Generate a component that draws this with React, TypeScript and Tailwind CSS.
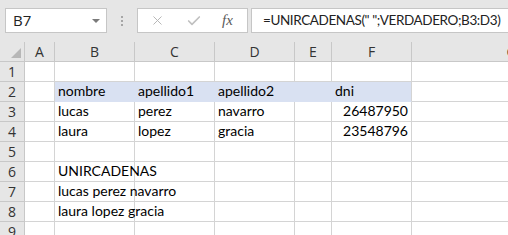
import { X, Check } from 'lucide-react';

const cols = ['A', 'B', 'C', 'D', 'E', 'F', 'G'];
const widths = ['w-[30px]', 'w-[80px]', 'w-[80px]', 'w-[80px]', 'w-[37px]', 'w-[80px]', 'w-[200px]'];

type Cell = { text?: string; right?: boolean };

const rows: Record<number, Record<number, Cell>> = {
  2: { 1: { text: 'nombre' }, 2: { text: 'apellido1' }, 3: { text: 'apellido2' }, 5: { text: 'dni' } },
  3: { 1: { text: 'lucas' }, 2: { text: 'perez' }, 3: { text: 'navarro' }, 5: { text: '26487950', right: true } },
  4: { 1: { text: 'laura' }, 2: { text: 'lopez' }, 3: { text: 'gracia' }, 5: { text: '23548796', right: true } },
  6: { 1: { text: 'UNIRCADENAS' } },
  7: { 1: { text: 'lucas perez navarro' } },
  8: { 1: { text: 'laura lopez gracia' } },
};

const App = () => {
  return (
    <div className="w-[508px] h-[235px] overflow-hidden bg-white" style={{ fontFamily: 'Lato, "Open Sans", sans-serif' }}>
      {/* formula bar */}
      <div className="h-[42px] bg-[#e6e6e6] flex items-start pt-[8px] pl-[5px] overflow-hidden">
        <div className="shrink-0 w-[102px] h-[25px] bg-white border border-[#c6c6c6] flex items-center justify-between pl-[7px] pr-[6px]">
          <span className="text-[15px] text-[#222]" style={{ fontFamily: '"Open Sans", sans-serif' }}>B7</span>
          <span className="w-0 h-0 border-l-[4px] border-r-[4px] border-t-[4px] border-l-transparent border-r-transparent border-t-[#7a7a7a]" />
        </div>
        <div className="shrink-0 w-[30px] h-[25px] flex flex-col items-center justify-center gap-[2px]">
          <span className="w-[2px] h-[2px] bg-[#a6a6a6]" />
          <span className="w-[2px] h-[2px] bg-[#a6a6a6]" />
          <span className="w-[2px] h-[2px] bg-[#a6a6a6]" />
        </div>
        <div className="shrink-0 w-[111px] h-[25px] bg-white border border-[#c6c6c6] flex items-center text-[#b3b3b3]">
          <X size={15} strokeWidth={1.5} className="ml-[12px]" />
          <Check size={16} strokeWidth={2.5} className="ml-[21px] text-[#c0c0c0]" />
          <span className="ml-[20px] text-[15px] italic text-[#5a5a5a]" style={{ fontFamily: '"Liberation Serif", serif' }}>fx</span>
        </div>
        <div className="ml-[3px] flex-1 min-w-0 h-[25px] bg-white border border-[#c6c6c6] border-r-0 flex items-center pl-[11px] overflow-hidden">
          <span className="text-[13.5px] tracking-[-0.4px] text-[#222] whitespace-nowrap">=UNIRCADENAS(" ";VERDADERO;B3:D3)</span>
        </div>
      </div>

      {/* column headers */}
      <div className="flex h-[20px] bg-[#e6e6e6] border-b border-[#c8c8c8] text-[14px] text-[#333]" style={{ fontFamily: '"Open Sans", sans-serif' }}>
        <div className="shrink-0 w-[25px] border-r border-[#c8c8c8] flex items-end justify-end pr-[3px] pb-[3px]">
          <svg width="10" height="10" viewBox="0 0 10 10">
            <polygon points="10,0 10,10 0,10" fill="#b7b7b7" />
          </svg>
        </div>
        {cols.map((c, i) => (
          <div key={c} className={`${widths[i]} shrink-0 border-r border-[#c8c8c8] flex items-center justify-center leading-none`}>
            {c}
          </div>
        ))}
      </div>

      {/* rows */}
      {[1, 2, 3, 4, 5, 6, 7, 8, 9].map(r => (
        <div key={r} className="flex h-[20px]">
          <div className="shrink-0 w-[25px] bg-[#e6e6e6] border-r border-b border-[#c8c8c8] flex items-center justify-center text-[14px] text-[#333] leading-none" style={{ fontFamily: '"Open Sans", sans-serif' }}>
            {r}
          </div>
          {cols.map((c, i) => {
            const cell = rows[r]?.[i];
            const hl = r === 2 && i >= 1 && i <= 5;
            return (
              <div
                key={c}
                className={`${widths[i]} shrink-0 border-b ${hl ? 'bg-[#d9e1f2] border-[#d9e1f2]' : 'border-[#d4d4d4]'} ${hl && i < 5 ? '' : 'border-r'} ${hl && i === 5 ? 'border-r-[#d4d4d4]' : ''} flex items-end pb-[1px] text-[14px] text-black leading-none whitespace-nowrap ${cell?.right ? 'justify-end pr-[3px]' : 'pl-[3px]'}`}
              >
                {cell?.text && <span className="pb-[2px]">{cell.text}</span>}
              </div>
            );
          })}
        </div>
      ))}
    </div>
  );
};

export default App;
